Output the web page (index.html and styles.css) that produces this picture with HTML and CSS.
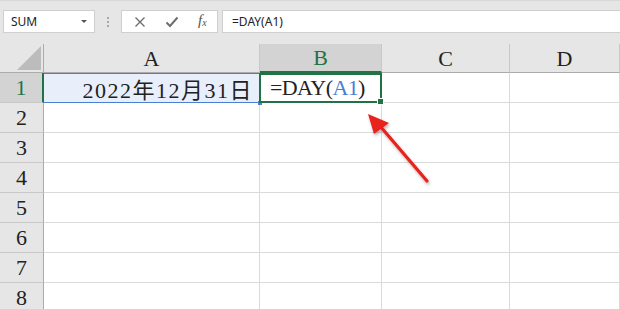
FILE: index.html
```html
<!DOCTYPE html>
<html lang="zh">
<head>
    <meta charset="UTF-8">
    <title>DAY</title>
    <link rel="stylesheet" href="styles.css">
</head>
<body>

    <!-- Formula bar -->
    <div class="formula-bar">
        <div class="name-box">SUM<span class="caret"></span></div>
        <div class="grip"><i></i><i></i><i></i></div>
        <div class="fx-buttons">
            <svg width="12" height="12" viewBox="0 0 12 12"><path d="M1.5 1.5 L10.5 10.5 M10.5 1.5 L1.5 10.5" stroke="#6e6e6e" stroke-width="1.4" fill="none"/></svg>
            <svg width="14" height="12" viewBox="0 0 14 12"><path d="M1.5 6.5 L5 10 L12.5 1.5" stroke="#6e6e6e" stroke-width="2" fill="none"/></svg>
            <span class="fx">f<sub>x</sub></span>
        </div>
        <div class="formula-input">=DAY(A1)</div>
    </div>

    <!-- Sheet -->
    <div class="sheet">
        <div class="corner"><span class="tri"></span></div>
        <div class="col-head">A</div>
        <div class="col-head active">B</div>
        <div class="col-head">C</div>
        <div class="col-head">D</div>

        <div class="row-head active">1</div>
        <div class="cell ref">2022年12月31日</div>
        <div class="cell selected">=DAY(<span class="ref-text">A1</span>)</div>
        <div class="cell"></div>
        <div class="cell"></div>

        <div class="row-head">2</div><div class="cell"></div><div class="cell"></div><div class="cell"></div><div class="cell"></div>
        <div class="row-head">3</div><div class="cell"></div><div class="cell"></div><div class="cell"></div><div class="cell"></div>
        <div class="row-head">4</div><div class="cell"></div><div class="cell"></div><div class="cell"></div><div class="cell"></div>
        <div class="row-head">5</div><div class="cell"></div><div class="cell"></div><div class="cell"></div><div class="cell"></div>
        <div class="row-head">6</div><div class="cell"></div><div class="cell"></div><div class="cell"></div><div class="cell"></div>
        <div class="row-head">7</div><div class="cell"></div><div class="cell"></div><div class="cell"></div><div class="cell"></div>
        <div class="row-head">8</div><div class="cell"></div><div class="cell"></div><div class="cell"></div><div class="cell"></div>
    </div>

    <!-- Red arrow pointing at B1 -->
    <svg class="arrow" width="620" height="309" viewBox="0 0 620 309">
        <defs>
            <filter id="shadow" x="-20%" y="-20%" width="140%" height="140%">
                <feDropShadow dx="1" dy="2" stdDeviation="1.5" flood-color="#000" flood-opacity="0.3"/>
            </filter>
        </defs>
        <g filter="url(#shadow)">
            <path d="M427 181 L380 126" stroke="#e8201c" stroke-width="3.2" stroke-linecap="round"/>
            <path d="M368 114 L389 123 L374 134 Z" fill="#e8201c"/>
        </g>
    </svg>

</body>
</html>
```

FILE: styles.css
```css
body {
    margin: 0;
    width: 620px;
    height: 309px;
    overflow: hidden;
    background: #fff;
    font-family: "Liberation Serif", "Noto Sans CJK SC", serif;
    position: relative;
}

/* formula bar */
.formula-bar {
    height: 44px;
    box-sizing: border-box;
    background: #e6e6e6;
    border-top: 1px solid #d8d8d8;
    padding: 9px 0 0 3px;
    display: flex;
    align-items: flex-start;
    font-family: "Noto Sans", "Open Sans", sans-serif;
    font-size: 12px;
    color: #222;
}
.name-box, .fx-buttons, .formula-input {
    height: 23px;
    box-sizing: border-box;
    background: #fff;
    border: 1px solid #cfcfcf;
    display: flex;
    align-items: center;
}
.name-box {
    width: 92px;
    padding-left: 7px;
    position: relative;
}
.caret {
    position: absolute;
    right: 7px;
    top: 9px;
    border-left: 3.5px solid transparent;
    border-right: 3.5px solid transparent;
    border-top: 3.5px solid #555;
}
.grip {
    width: 26px;
    display: flex;
    flex-direction: column;
    align-items: center;
    gap: 2px;
    padding-top: 7px;
}
.grip i {
    width: 2px;
    height: 2px;
    background: #a8a8a8;
}
.fx-buttons {
    width: 97px;
    padding-left: 12px;
    gap: 19px;
}
.fx {
    font-family: "Liberation Serif", serif;
    font-style: italic;
    font-size: 15px;
    color: #555;
    margin-top: -2px;
}
.fx sub {
    font-size: 10px;
    vertical-align: -1px;
}
.formula-input {
    flex: 1;
    margin-left: 4px;
    padding-left: 9px;
    border-right: none;
}

/* sheet */
.sheet {
    display: grid;
    grid-template-columns: 44px 216px 122px 128px 1fr;
    grid-template-rows: 29px repeat(8, 30px);
    font-size: 22px;
    color: #222;
}
.corner, .col-head, .row-head {
    background: #e6e6e6;
    box-sizing: border-box;
    border-right: 1px solid #c8c8c8;
    border-bottom: 1px solid #c8c8c8;
    display: flex;
    align-items: center;
    justify-content: center;
}
.corner {
    position: relative;
    border-right: 1px solid #ababab;
    border-bottom: 1px solid #ababab;
}
.tri {
    position: absolute;
    right: 2px;
    bottom: 2px;
    border-left: 24px solid transparent;
    border-bottom: 24px solid #bcbcbc;
}
.col-head {
    border-bottom-color: #ababab;
    padding-top: 1px;
}
.row-head {
    border-right-color: #ababab;
    border-bottom-color: #c8c8c8;
}
.col-head.active {
    background: #d3d3d3;
    color: #217346;
    border-bottom: 2px solid #217346;
}
.row-head.active {
    background: #d3d3d3;
    color: #217346;
    border-right: 2px solid #217346;
}
.cell {
    box-sizing: border-box;
    border-right: 1px solid #dadada;
    border-bottom: 1px solid #dadada;
    display: flex;
    align-items: center;
    white-space: nowrap;
}
.cell.ref {
    background: #e8effb;
    border: 1px solid #4a7fd4;
    border-left: none;
    justify-content: flex-end;
    padding-right: 6px;
    letter-spacing: 1.5px;
    position: relative;
}
.cell.ref::after {
    content: "";
    position: absolute;
    right: -3px;
    bottom: -3px;
    width: 4px;
    height: 4px;
    background: #4a7fd4;
}
.cell.selected {
    border: 2px solid #217346;
    margin-left: -1px;
    padding-left: 9px;
    letter-spacing: -0.6px;
    position: relative;
}
.cell.selected::after {
    content: "";
    position: absolute;
    right: -4px;
    bottom: -4px;
    width: 5px;
    height: 5px;
    background: #217346;
    border: 1px solid #fff;
}
.ref-text {
    color: #4a7fd4;
}

.arrow {
    position: absolute;
    left: 0;
    top: 0;
}
```
